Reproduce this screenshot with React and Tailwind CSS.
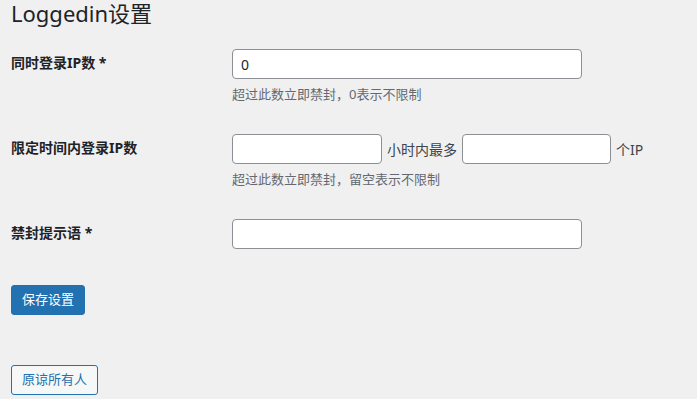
export default function App() {
  return (
    <div className="min-h-screen bg-[#f0f0f1] text-[#1d2327] font-['Noto_Sans','Noto_Sans_CJK_SC',sans-serif] px-[11px]">
      <h1 className="text-[22px] leading-[26px] font-normal">Loggedin设置</h1>

      <form className="mt-[8px]">
        {/* 同时登录IP数 */}
        <div className="flex">
          <div className="w-[221px] shrink-0 pt-[20px] text-[14px] font-bold leading-[18px]">同时登录IP数 *</div>
          <div className="pt-[15px]">
            <input
              type="text"
              defaultValue="0"
              className="w-[350px] h-[30px] px-[8px] bg-white border border-[#8c8f94] rounded-[4px] text-[14px] outline-none"
            />
            <p className="mt-[5px] text-[13px] leading-[20px] text-[#646970]">超过此数立即禁封，0表示不限制</p>
          </div>
        </div>

        {/* 限定时间内登录IP数 */}
        <div className="flex mt-[15px]">
          <div className="w-[221px] shrink-0 pt-[20px] text-[14px] font-bold leading-[18px]">限定时间内登录IP数</div>
          <div className="pt-[15px]">
            <div className="flex items-center text-[14px]">
              <input
                type="text"
                className="w-[150px] h-[30px] px-[8px] bg-white border border-[#8c8f94] rounded-[4px] outline-none"
              />
              <span className="mx-[5px] text-[#3c434a]">小时内最多</span>
              <input
                type="text"
                className="w-[149px] h-[30px] px-[8px] bg-white border border-[#8c8f94] rounded-[4px] outline-none"
              />
              <span className="ml-[5px] text-[#3c434a]">个IP</span>
            </div>
            <p className="mt-[5px] text-[13px] leading-[20px] text-[#646970]">超过此数立即禁封，留空表示不限制</p>
          </div>
        </div>

        {/* 禁封提示语 */}
        <div className="flex mt-[15px]">
          <div className="w-[221px] shrink-0 pt-[20px] text-[14px] font-bold leading-[18px]">禁封提示语 *</div>
          <div className="pt-[15px]">
            <input
              type="text"
              className="w-[350px] h-[30px] px-[8px] bg-white border border-[#8c8f94] rounded-[4px] text-[14px] outline-none"
            />
          </div>
        </div>

        <button
          type="button"
          className="mt-[36px] h-[30px] px-[10px] bg-[#2271b1] border border-[#2271b1] rounded-[3px] text-white text-[13px]"
        >
          保存设置
        </button>
      </form>

      <button
        type="button"
        className="mt-[50px] h-[30px] px-[10px] bg-[#f6f7f7] border border-[#2271b1] rounded-[3px] text-[#2271b1] text-[13px]"
      >
        原谅所有人
      </button>
    </div>
  )
}
